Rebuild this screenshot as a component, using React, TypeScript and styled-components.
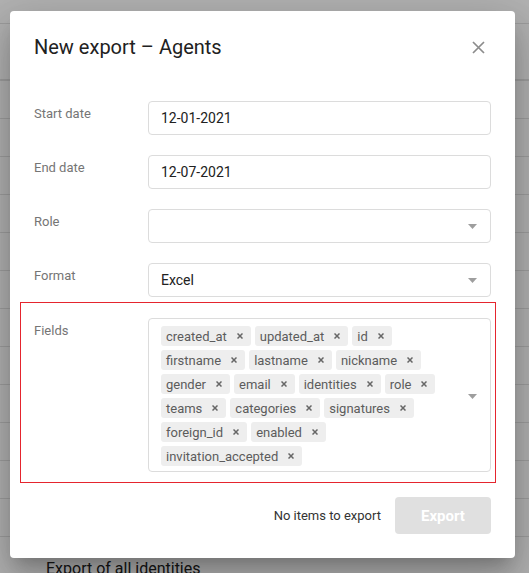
import React from "react";
import styled, { createGlobalStyle } from "styled-components";

const GlobalStyle = createGlobalStyle`
  html, body { margin: 0; padding: 0; }
  body {
    font-family: Roboto, "Liberation Sans", Arial, sans-serif;
    background: #fff;
    width: 529px;
    height: 573px;
    overflow: hidden;
  }
  * { box-sizing: border-box; }
`;

const Page = styled.div`
  position: relative;
  width: 529px;
  height: 573px;
  overflow: hidden;
  background: #fff;
`;

const BgList = styled.div`
  display: flex;
  flex-direction: column;
`;

const BgTop = styled.div`
  height: 24px;
  border-bottom: 1px solid #e2e2e2;
`;

const BgHeader = styled.div`
  height: 57px;
  border-bottom: 2px solid #e2e2e2;
`;

const BgRow = styled.div`
  height: 38px;
  border-bottom: 1px solid #e2e2e2;
`;

const BgSection = styled.div`
  padding: 22px 0 0 46px;
  font-size: 16px;
  line-height: 20px;
  color: #222;
`;

const Overlay = styled.div`
  position: absolute;
  inset: 0;
  background: rgba(0, 0, 0, 0.3);
`;

const Dialog = styled.div`
  position: absolute;
  left: 10px;
  top: 11px;
  width: 505px;
  background: #fff;
  border-radius: 4px;
  padding: 24px 24px 24px 24px;
  display: flex;
  flex-direction: column;
  box-shadow: 0 11px 15px -7px rgba(0, 0, 0, 0.2),
    0 24px 38px 3px rgba(0, 0, 0, 0.14), 0 9px 46px 8px rgba(0, 0, 0, 0.12);
`;

const Header = styled.div`
  display: flex;
  align-items: center;
  justify-content: space-between;
  height: 24px;
`;

const Title = styled.h2`
  margin: 0;
  font-size: 20px;
  line-height: 24px;
  font-weight: 400;
  color: #212121;
`;

const CloseButton = styled.button`
  display: flex;
  align-items: center;
  justify-content: center;
  width: 14px;
  height: 14px;
  padding: 0;
  margin-right: 6px;
  border: none;
  background: none;
  cursor: pointer;
`;

const Form = styled.div`
  display: flex;
  flex-direction: column;
  gap: 20px;
  margin-top: 42px;
`;

const Row = styled.div`
  display: grid;
  grid-template-columns: 114px 1fr;
  align-items: start;
`;

const Label = styled.div`
  padding-top: 5px;
  font-size: 13px;
  line-height: 16px;
  color: #757575;
`;

const Field = styled.div`
  height: 34px;
  display: flex;
  align-items: center;
  justify-content: space-between;
  padding: 0 13px 0 12px;
  border: 1px solid #dcdcdc;
  border-radius: 4px;
  font-size: 14px;
  color: #212121;
`;

const Highlight = styled.div`
  margin: -15px -5px 0 -14px;
  border: 1px solid #e5252e;
  padding: 15px 4px 10px 13px;
`;

const MultiBox = styled.div`
  display: flex;
  align-items: stretch;
  padding: 7px 13px 5px 12px;
  border: 1px solid #dcdcdc;
  border-radius: 4px;
`;

const ChipList = styled.div`
  flex: 1;
  display: flex;
  flex-wrap: wrap;
  gap: 4px;
`;

const CaretSlot = styled.div`
  width: 32px;
  flex: none;
  display: flex;
  align-items: center;
  justify-content: flex-end;
`;

const Chip = styled.span`
  display: inline-flex;
  align-items: center;
  gap: 10px;
  height: 20px;
  padding: 0 8px 0 5px;
  background: #eeeeee;
  border-radius: 3px;
  font-size: 13px;
  color: #5c5c5c;
  white-space: nowrap;
`;

const Footer = styled.div`
  display: flex;
  justify-content: flex-end;
  align-items: center;
  gap: 14px;
  margin-top: 14px;
`;

const FooterNote = styled.span`
  font-size: 13px;
  color: #333;
`;

const ExportButton = styled.button`
  width: 96px;
  height: 37px;
  border: none;
  border-radius: 4px;
  background: #e0e0e0;
  color: #fff;
  font-family: inherit;
  font-size: 15px;
  font-weight: 700;
  cursor: default;
`;

const Caret = () => (
  <svg width="9" height="5" viewBox="0 0 9 5">
    <path d="M0 0 L9 0 L4.5 5 Z" fill="#9e9e9e" />
  </svg>
);

const SmallX = () => (
  <svg width="6" height="6" viewBox="0 0 6 6">
    <path d="M0.5 0.5 L5.5 5.5 M5.5 0.5 L0.5 5.5" stroke="#666" strokeWidth="1.5" />
  </svg>
);

const fields = [
  "created_at",
  "updated_at",
  "id",
  "firstname",
  "lastname",
  "nickname",
  "gender",
  "email",
  "identities",
  "role",
  "teams",
  "categories",
  "signatures",
  "foreign_id",
  "enabled",
  "invitation_accepted",
];

export default function App() {
  return (
    <>
      <GlobalStyle />
      <Page>
        <BgList>
          <BgTop />
          <BgHeader />
          {Array.from({ length: 12 }).map((_, i) => (
            <BgRow key={i} />
          ))}
          <BgSection>Export of all identities</BgSection>
        </BgList>
        <Overlay />
        <Dialog>
          <Header>
            <Title>New export – Agents</Title>
            <CloseButton aria-label="Close">
              <svg width="13" height="13" viewBox="0 0 13 13">
                <path d="M1 1 L12 12 M12 1 L1 12" stroke="#8c8c8c" strokeWidth="1.7" />
              </svg>
            </CloseButton>
          </Header>
          <Form>
            <Row>
              <Label>Start date</Label>
              <Field>12-01-2021</Field>
            </Row>
            <Row>
              <Label>End date</Label>
              <Field>12-07-2021</Field>
            </Row>
            <Row>
              <Label>Role</Label>
              <Field>
                <span />
                <Caret />
              </Field>
            </Row>
            <Row>
              <Label>Format</Label>
              <Field>
                <span>Excel</span>
                <Caret />
              </Field>
            </Row>
            <Highlight>
              <Row>
                <Label>Fields</Label>
                <MultiBox>
                  <ChipList>
                    {fields.map((f) => (
                      <Chip key={f}>
                        {f}
                        <SmallX />
                      </Chip>
                    ))}
                  </ChipList>
                  <CaretSlot>
                    <Caret />
                  </CaretSlot>
                </MultiBox>
              </Row>
            </Highlight>
          </Form>
          <Footer>
            <FooterNote>No items to export</FooterNote>
            <ExportButton disabled>Export</ExportButton>
          </Footer>
        </Dialog>
      </Page>
    </>
  );
}
